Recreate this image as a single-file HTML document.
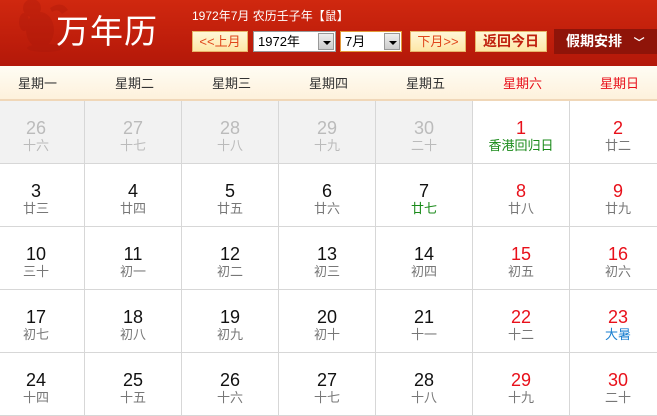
<!DOCTYPE html>
<html><head><meta charset="utf-8"><style>
*{margin:0;padding:0;box-sizing:border-box}
body{width:657px;height:411px;overflow:hidden;background:#fff;font-family:"Liberation Sans","Noto Sans CJK SC",sans-serif;position:relative}
.hd{position:absolute;left:0;top:0;width:657px;height:66px;background:linear-gradient(#d0280f,#bf1e0b 60%,#b3180a)}
.title{position:absolute;left:56px;top:5px;color:#fff;font-size:33px;letter-spacing:1px}
.info{position:absolute;left:192px;top:7px;color:#fff;font-size:12px}
.btn{position:absolute;top:31px;height:21px;background:linear-gradient(#fff7d8,#fde7a8);border:1px solid #e7b56a;color:#e0461a;font-size:13px;line-height:19px;text-align:center}
.sel{position:absolute;top:31px;height:21px;background:#fff;border:1px solid #999;font-size:13px;line-height:19px;padding-left:4px;color:#000}
.sel i{position:absolute;right:1px;top:1px;width:16px;height:17px;background:linear-gradient(#eee,#ccc);border:1px solid #999}
.sel i:after{content:"";position:absolute;left:4px;top:7px;border:4px solid transparent;border-top:4px solid #000;border-bottom:0}
.hol{position:absolute;left:554px;top:29px;width:103px;height:25px;background:#8f1409;color:#fff;font-weight:bold;font-size:14px;line-height:25px;padding-left:12px}
.wk{position:absolute;left:0;top:66px;width:657px;height:35px;background:linear-gradient(#fffdf4,#fdf1dc);border-bottom:2px solid #f0d7b8}
.wk div{position:absolute;top:0;width:97px;text-align:center;font-size:13px;line-height:36px;color:#333}
.grid{position:absolute;left:-12px;top:101px}
.c{position:absolute;width:97px;height:63px;border-right:1px solid #d7d7d7;border-bottom:1px solid #d7d7d7;text-align:center}
.c b{display:block;font-weight:normal;font-size:18px;margin-top:17px;line-height:20px;color:#111}
.c s{display:block;text-decoration:none;font-size:13px;line-height:15px;color:#777}
.g{background:#f2f2f2}.g b,.g s{color:#bbb}
.r b{color:#e8101a}
</style></head><body>
<div class="hd">
<svg width="70" height="60" style="position:absolute;left:10px;top:0"><g fill="#a6160a" opacity=".3"><ellipse cx="30" cy="30" rx="14" ry="18"/><circle cx="22" cy="8" r="9"/><ellipse cx="14" cy="22" rx="5" ry="9"/><ellipse cx="35" cy="48" rx="18" ry="4"/><path d="M40 8 Q52 0 58 10 L52 14 Q48 8 42 12Z"/></g></svg>
<div class="title">万年历</div>
<div class="info">1972年7月 农历壬子年【鼠】</div>
<div class="btn" style="left:192px;width:56px">&lt;&lt;上月</div>
<div class="sel" style="left:253px;width:83px">1972年<i></i></div>
<div class="sel" style="left:340px;width:62px;border-color:#e39a3a">7月<i></i></div>
<div class="btn" style="left:410px;width:56px">下月&gt;&gt;</div>
<div class="btn" style="left:475px;width:72px;font-weight:bold;color:#c0200e;font-size:14px">返回今日</div>
<div class="hol">假期安排 &nbsp; <span style="font-size:11px">﹀</span></div>
</div>
<div class="wk">
<div style="left:-11px">星期一</div><div style="left:86px">星期二</div><div style="left:183px">星期三</div><div style="left:280px">星期四</div><div style="left:377px">星期五</div><div style="left:474px;color:#e8101a">星期六</div><div style="left:571px;color:#e8101a">星期日</div>
</div>
<div class="grid">
<div class="c g" style="left:0;top:0"><b>26</b><s>十六</s></div>
<div class="c g" style="left:97px;top:0"><b>27</b><s>十七</s></div>
<div class="c g" style="left:194px;top:0"><b>28</b><s>十八</s></div>
<div class="c g" style="left:291px;top:0"><b>29</b><s>十九</s></div>
<div class="c g" style="left:388px;top:0"><b>30</b><s>二十</s></div>
<div class="c r" style="left:485px;top:0"><b>1</b><s style="color:#1a8a1a">香港回归日</s></div>
<div class="c r" style="left:582px;top:0"><b>2</b><s>廿二</s></div>

<div class="c" style="left:0;top:63px"><b>3</b><s>廿三</s></div>
<div class="c" style="left:97px;top:63px"><b>4</b><s>廿四</s></div>
<div class="c" style="left:194px;top:63px"><b>5</b><s>廿五</s></div>
<div class="c" style="left:291px;top:63px"><b>6</b><s>廿六</s></div>
<div class="c" style="left:388px;top:63px"><b>7</b><s style="color:#1a8a1a">廿七</s></div>
<div class="c r" style="left:485px;top:63px"><b>8</b><s>廿八</s></div>
<div class="c r" style="left:582px;top:63px"><b>9</b><s>廿九</s></div>

<div class="c" style="left:0;top:126px"><b>10</b><s>三十</s></div>
<div class="c" style="left:97px;top:126px"><b>11</b><s>初一</s></div>
<div class="c" style="left:194px;top:126px"><b>12</b><s>初二</s></div>
<div class="c" style="left:291px;top:126px"><b>13</b><s>初三</s></div>
<div class="c" style="left:388px;top:126px"><b>14</b><s>初四</s></div>
<div class="c r" style="left:485px;top:126px"><b>15</b><s>初五</s></div>
<div class="c r" style="left:582px;top:126px"><b>16</b><s>初六</s></div>

<div class="c" style="left:0;top:189px"><b>17</b><s>初七</s></div>
<div class="c" style="left:97px;top:189px"><b>18</b><s>初八</s></div>
<div class="c" style="left:194px;top:189px"><b>19</b><s>初九</s></div>
<div class="c" style="left:291px;top:189px"><b>20</b><s>初十</s></div>
<div class="c" style="left:388px;top:189px"><b>21</b><s>十一</s></div>
<div class="c r" style="left:485px;top:189px"><b>22</b><s>十二</s></div>
<div class="c r" style="left:582px;top:189px"><b>23</b><s style="color:#1a7fd0">大暑</s></div>

<div class="c" style="left:0;top:252px"><b>24</b><s>十四</s></div>
<div class="c" style="left:97px;top:252px"><b>25</b><s>十五</s></div>
<div class="c" style="left:194px;top:252px"><b>26</b><s>十六</s></div>
<div class="c" style="left:291px;top:252px"><b>27</b><s>十七</s></div>
<div class="c" style="left:388px;top:252px"><b>28</b><s>十八</s></div>
<div class="c r" style="left:485px;top:252px"><b>29</b><s>十九</s></div>
<div class="c r" style="left:582px;top:252px"><b>30</b><s>二十</s></div>
</div>
</body></html>
